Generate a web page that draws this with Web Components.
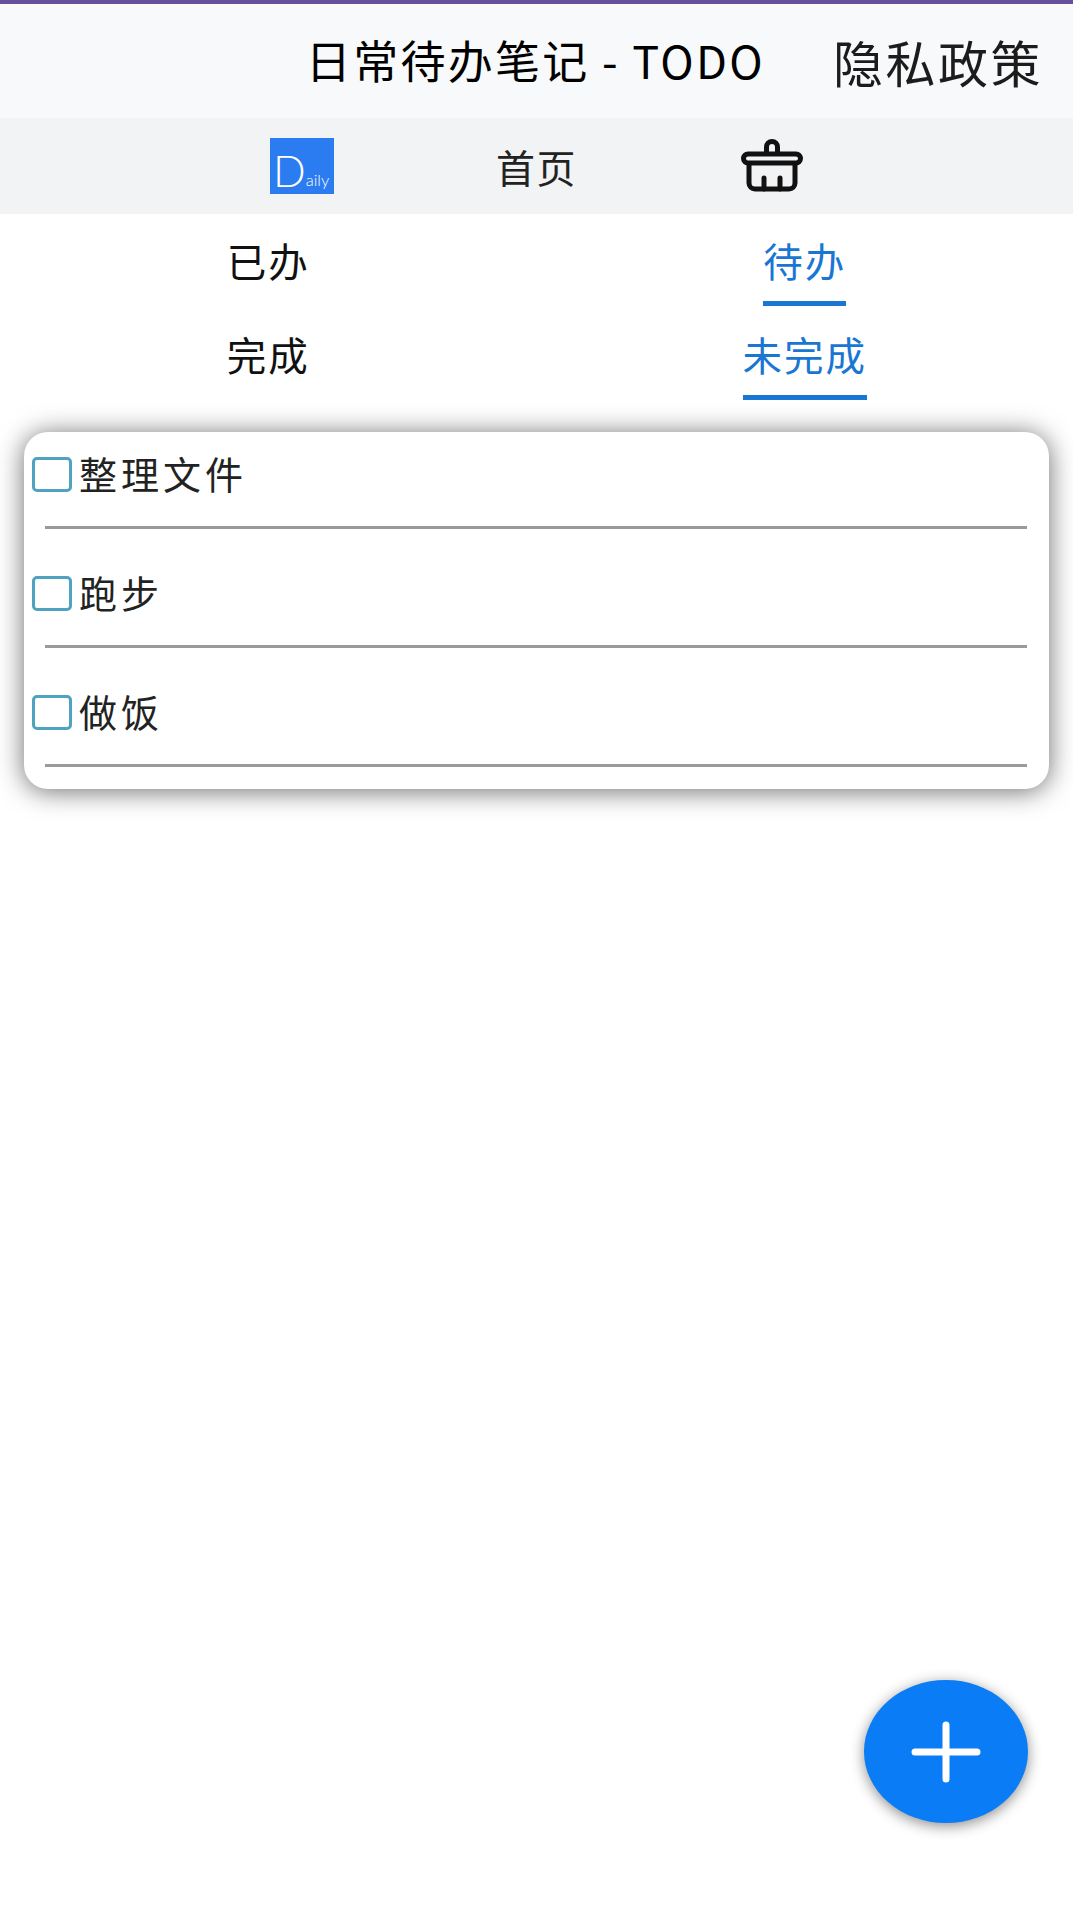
<!DOCTYPE html>
<html lang="zh">
<head>
<meta charset="utf-8">
<title>日常待办笔记 - TODO</title>
<style>
  html, body {
    margin: 0;
    height: 100%;
    background: #fff;
  }

  body {
    font-family: "Noto Sans CJK SC", "Noto Sans", sans-serif;
  }
</style>
</head>
<body>
<todo-app></todo-app>

<script>
// Title bar with the page name and the privacy link.
class AppHeader extends HTMLElement {
  constructor () {
    super()
    this.attachShadow({ mode: 'open' }).innerHTML = `
      <style>
        :host {
          display: flex;
          justify-content: flex-end;
          align-items: center;
          box-sizing: border-box;
          height: 118px;
          border-top: 4px solid #674f9f;
          padding-right: 30px;
          gap: 68px;
          background: #f8f9fa;
          color: #000;
        }

        .title {
          font-size: 45px;
          letter-spacing: 2.300px;
          white-space: nowrap;
          margin-top: -3px;
        }

        .privacy {
          font-size: 50px;
          letter-spacing: 2.500px;
          color: #1c1c1c;
          white-space: nowrap;
        }
      </style>
      <div class="title"><slot></slot></div>
      <div class="privacy"><slot name="link"></slot></div>
    `
  }
}

// Row with the logo, the home link and the basket.
class AppNav extends HTMLElement {
  constructor () {
    super()
    this.attachShadow({ mode: 'open' }).innerHTML = `
      <style>
        :host {
          display: flex;
          justify-content: center;
          align-items: center;
          height: 96px;
          gap: 164px;
          background: #f2f3f5;
          color: #222;
          font-size: 39px;
          letter-spacing: 1.500px;
        }

        .logo {
          display: flex;
          align-items: flex-end;
          box-sizing: border-box;
          width: 64px;
          height: 56px;
          padding: 0 0 6px 3px;
          background: #2b7cf0;
          color: #fff;
          font-family: "Lato", sans-serif;
          letter-spacing: 0;
          line-height: 1;
        }

        .logo b {
          font-weight: 300;
          font-size: 43px;
          line-height: 35px;
        }

        .logo span {
          font-size: 16.500px;
          font-weight: 300;
          line-height: 16px;
        }

        .home {
          margin: 0 2px 0 -2px;
        }

        svg {
          display: block;
          margin-left: -2px;
        }
      </style>
      <div class="logo"><b>D</b><span>aily</span></div>
      <div class="home"><slot></slot></div>
      <svg width="62" height="54" viewBox="0 0 62 54" fill="none" stroke="#111" stroke-width="5" stroke-linecap="round" stroke-linejoin="round">
        <path d="M25.500 14V8a5.500 5.500 0 0 1 11 0v6"/>
        <rect x="2.500" y="15" width="57" height="9" rx="4.500"/>
        <path d="M8 25v19a6 6 0 0 0 6 6h34a6 6 0 0 0 6-6V25"/>
        <path d="M23 39v11M39 39v11"/>
      </svg>
    `
  }
}

// Two tabs side by side, the active one is blue and underlined.
class TabRow extends HTMLElement {
  constructor () {
    super()
    const left = this.getAttribute('left')
    const right = this.getAttribute('right')

    this.attachShadow({ mode: 'open' }).innerHTML = `
      <style>
        :host {
          display: grid;
          grid-template-columns: 1fr 1fr;
          height: 94px;
          font-size: 39.500px;
          letter-spacing: 2px;
          color: #111;
        }

        div {
          display: flex;
          justify-content: center;
        }

        span {
          box-sizing: border-box;
          height: 92px;
          padding-top: 18px;
          line-height: 56px;
          white-space: nowrap;
        }

        .active {
          color: #1976d2;
          border-bottom: 5px solid #1976d2;
        }
      </style>
      <div><span>${left}</span></div>
      <div><span class="active">${right}</span></div>
    `
  }
}

// White rounded card holding the todo items.
class TodoCard extends HTMLElement {
  constructor () {
    super()
    this.attachShadow({ mode: 'open' }).innerHTML = `
      <style>
        :host {
          display: flex;
          flex-direction: column;
          gap: 22px;
          margin: 30px 24px 0;
          padding-bottom: 22px;
          border-radius: 24px;
          background: #fff;
          box-shadow: 0 2px 27px rgba(0, 0, 0, 0.58);
        }
      </style>
      <slot></slot>
    `
  }
}

// One todo: checkbox, text and a divider below.
class TodoItem extends HTMLElement {
  constructor () {
    super()
    this.attachShadow({ mode: 'open' }).innerHTML = `
      <style>
        :host {
          display: block;
          font-size: 38px;
          letter-spacing: 4px;
          color: #222;
        }

        .row {
          display: flex;
          align-items: center;
          gap: 7px;
          height: 84px;
          padding-left: 8px;
        }

        .box {
          box-sizing: border-box;
          width: 40px;
          height: 35px;
          border: 3px solid #4fa3c0;
          border-radius: 5px;
        }

        .text {
          margin-top: -3px;
        }

        hr {
          height: 3px;
          margin: 10px 22px 0 21px;
          border: 0;
          background: #9a9a9a;
        }
      </style>
      <div class="row">
        <div class="box"></div>
        <div class="text"><slot></slot></div>
      </div>
      <hr>
    `
  }
}

// Round add button that floats over the page.
class AddButton extends HTMLElement {
  constructor () {
    super()
    this.attachShadow({ mode: 'open' }).innerHTML = `
      <style>
        :host {
          position: absolute;
          left: 864px;
          top: 1680px;
          display: flex;
          justify-content: center;
          align-items: center;
          width: 164px;
          height: 143px;
          border-radius: 50%;
          background: #0a7cf5;
          box-shadow: 0 3px 14px rgba(0, 0, 0, 0.45);
        }
      </style>
      <svg width="70" height="62" viewBox="0 0 70 62" fill="none" stroke="#fff" stroke-width="7" stroke-linecap="round">
        <path d="M35 4v54M4 31h62"/>
      </svg>
    `
  }
}

// The whole page.
class TodoApp extends HTMLElement {
  constructor () {
    super()
    this.attachShadow({ mode: 'open' }).innerHTML = `
      <style>
        :host {
          display: block;
          position: relative;
          height: 1913px;
          overflow: hidden;
          font-family: "Noto Sans CJK SC", "Noto Sans", sans-serif;
        }
      </style>
      <app-header>日常待办笔记 - TODO<span slot="link">隐私政策</span></app-header>
      <app-nav>首页</app-nav>
      <tab-row left="已办" right="待办"></tab-row>
      <tab-row left="完成" right="未完成"></tab-row>
      <todo-card>
        <todo-item>整理文件</todo-item>
        <todo-item>跑步</todo-item>
        <todo-item>做饭</todo-item>
      </todo-card>
      <add-button></add-button>
    `
  }
}

customElements.define('app-header', AppHeader)
customElements.define('app-nav', AppNav)
customElements.define('tab-row', TabRow)
customElements.define('todo-card', TodoCard)
customElements.define('todo-item', TodoItem)
customElements.define('add-button', AddButton)
customElements.define('todo-app', TodoApp)
</script>
</body>
</html>
